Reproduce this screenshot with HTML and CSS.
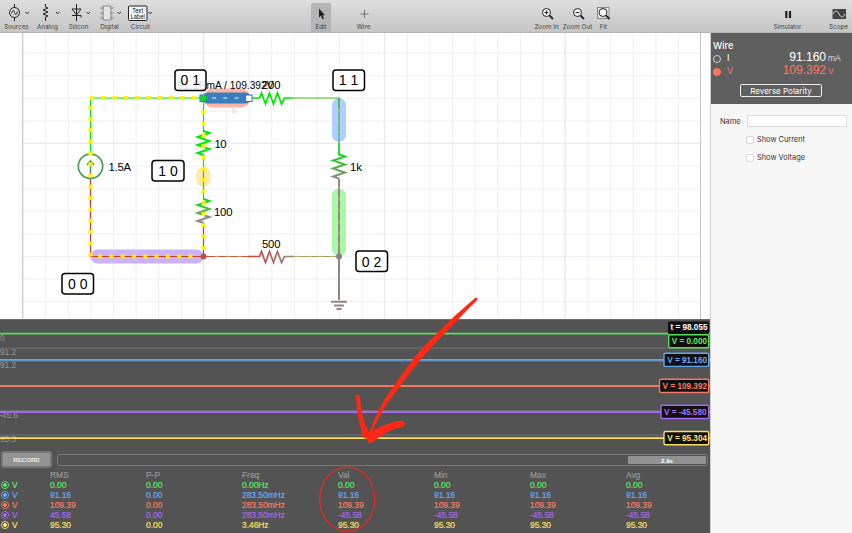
FILE: index.html
```html
<!DOCTYPE html>
<html lang="en">
<head>
<meta charset="utf-8">
<title>Circuit Simulator</title>
<link rel="stylesheet" href="styles.css">
</head>
<body>
<div class="app">
  <header class="toolbar">
    <nav class="tools parts">
      <div class="tool"><svg class="icon" viewBox="0 0 32 22"><path d="M13.500 2v3.500M13.500 15.500v3.500"/><circle cx="13.500" cy="10.500" r="5"/><path d="M10.500 11.500c1-4 2.500-3.500 3-1s2 3 3-1"/><path d="M24.500 10l1.700 1.700 1.700-1.700"/></svg><span>Sources</span></div>
      <div class="tool"><svg class="icon" viewBox="0 0 32 22"><path d="M13.500 2v3l2.500 1-5 2 5 2-5 2 5 2-2.500 1v4M24 10l1.700 1.700 1.700-1.700"/></svg><span>Analog</span></div>
      <div class="tool"><svg class="icon" viewBox="0 0 32 22"><path d="M13.500 2v17M9 7h9l-4.500 6zM9 13.500h9v2M23.500 10l1.700 1.700 1.700-1.700"/></svg><span>Silicon</span></div>
      <div class="tool"><svg class="icon digital" viewBox="0 0 32 22"><path d="M9 4h8v14H9zM6 6h4M6 11h4M6 16h4M16 6h4M16 11h4M16 16h4"/><path class="dark" d="M23.500 10l1.700 1.700 1.700-1.700"/></svg><span>Digital</span></div>
      <div class="tool"><svg class="icon" viewBox="0 0 32 22"><rect class="paper" x="3.500" y="4" width="18.500" height="14.500" rx="1"/><text x="12.700" y="10.500" text-anchor="middle">Text</text><text x="12.700" y="16.500" text-anchor="middle">Label</text><path d="M23.500 10l1.700 1.700 1.700-1.700"/></svg><span>Circuit</span></div>
    </nav>
    <nav class="tools modes">
      <div class="tool selected"><svg class="icon" viewBox="0 0 32 22"><path class="solid" d="M14 7.500v9l2-1.700 1.500 3.500 1.500-.7-1.500-3.300h2.500z"/></svg><span>Edit</span></div>
      <div class="tool"><svg class="icon thin" viewBox="0 0 32 22"><path d="M16.500 9v8M12.500 13h8"/></svg><span>Wire</span></div>
    </nav>
    <nav class="tools zooms">
      <div class="tool"><svg class="icon" viewBox="0 0 32 22"><circle class="paper" cx="15.500" cy="11.500" r="4"/><path d="M13.500 11.500h4M15.500 9.500v4"/><path class="thick" d="M18.500 14.500l3.500 3.500"/></svg><span>Zoom In</span></div>
      <div class="tool"><svg class="icon" viewBox="0 0 32 22"><circle class="paper" cx="15.500" cy="11.500" r="4"/><path d="M13.500 11.500h4"/><path class="thick" d="M18.500 14.500l3.500 3.500"/></svg><span>Zoom Out</span></div>
      <div class="tool"><svg class="icon" viewBox="0 0 32 22"><rect class="frame" x="9.500" y="6.500" width="11.500" height="11"/><circle class="paper" cx="15" cy="11.500" r="4"/><path class="thick" d="M18 14.500l3.500 3.500"/></svg><span>Fit</span></div>
    </nav>
    <nav class="tools views">
      <div class="tool"><svg class="icon" viewBox="0 0 32 22"><path class="solid" d="M13.200 10h2.200v7h-2.200zM16.900 10h2.200v7h-2.200z"/></svg><span>Simulator</span></div>
      <div class="tool"><svg class="icon" viewBox="0 0 32 22"><path class="screen" d="M9.500 8h13.500v10H9.500z"/><path class="wave" d="M10 13c2-4 4-4 6 0s4 4 6 0"/></svg><span>Scope</span></div>
    </nav>
  </header>

  <div class="body">
    <main class="workspace">
      <svg class="canvas" viewBox="0 33 710 286">
        <defs>
          <pattern id="grid" x="22.650" y="52.600" width="22.600" height="22.600" patternUnits="userSpaceOnUse"><path d="M0 0H22.600M0 0V22.600" fill="none" stroke="#e9ebf4" stroke-width="1.600"/></pattern>
          <linearGradient id="fall" gradientUnits="userSpaceOnUse" x1="0" y1="152" x2="0" y2="180"><stop stop-color="#00e40c"/><stop offset="1" stop-color="#968484"/></linearGradient>
          <linearGradient id="mid" gradientUnits="userSpaceOnUse" x1="0" y1="200" x2="0" y2="220"><stop stop-color="#00e40c"/><stop offset="1" stop-color="#968484"/></linearGradient>
          <linearGradient id="low" gradientUnits="userSpaceOnUse" x1="250" y1="0" x2="290" y2="0"><stop stop-color="#d04030"/><stop offset="1" stop-color="#96847c"/></linearGradient>
        </defs>
        <rect x="22.500" y="33" width="678" height="285.500" fill="url(#grid)"/>
        <path class="major" d="M203.500 33v286M384.300 33v286M565 33v286M22 143.200h678"/>
        <path class="border" d="M22.600 33v286M700.500 33v286"/>

        <g class="halo">
          <path stroke="#ffb4a6" stroke-width="19" d="M213 98h28"/>
          <path stroke="#3c7dbd" stroke-width="11" d="M208 98h37"/>
          <path stroke="#afd0ff" stroke-width="14" d="M339 105v30"/>
          <path stroke="#ffe8a9" stroke-width="14" d="M203.500 174v6"/>
          <path stroke="#a9f8a7" stroke-width="14" d="M339 195.500v53.500"/>
          <path stroke="#ccb1ff" stroke-width="14" d="M97.500 256.500h99"/>
        </g>
        <path class="ghost" d="M210 110.500h22v-3l8 3.500-8 3.500v-3h-22z"/>

        <g class="wire">
          <path stroke="#00f000" d="M90.500 154V98h113v34M203.500 155v45M204 98h4"/>
          <path stroke="#00e800" stroke-width="1.700" d="M249 98h10.500l2-5 4 11 4-11 4 11 4-11 4 11 3-6H293"/>
          <path stroke="#48c22c" d="M293 98h46v12"/>
          <path stroke="#3daa65" d="M339 98v45"/>
          <path stroke="#00dc16" stroke-width="1.700" d="M339 143v12"/>
          <path stroke="url(#fall)" stroke-width="1.900" d="M339 153v1.500l6 2-12 4 12 4-12 4 12 4-12 4 6 2"/>
          <path stroke="#968484" stroke-width="2" d="M339 179v121M331 301.700h16M334 305.500h10M336.500 309h5"/>
          <path stroke="#00e800" stroke-width="1.900" d="M203.500 131l6 2-12 4 12 4-12 4 12 4-12 4 6 2"/>
          <path stroke="url(#mid)" stroke-width="1.900" d="M203.500 199l6 2-12 4 12 4-12 4 12 4-12 4 6 2"/>
          <path stroke="#c63c30" d="M90.500 179v77.500h113V223"/>
          <path stroke="#cc5644" d="M204 256.500h45"/>
          <path stroke="url(#low)" stroke-width="1.700" d="M248 256.500h11.500l2-5 4 11 4-11 4 11 4-11 4 11 3-6H294"/>
          <path stroke="#a39a6e" d="M293 256.500h46"/>
          <circle cx="90.500" cy="166.300" r="12.200" stroke="#499c50" stroke-width="1.700"/>
          <path stroke="#499c50" stroke-width="1.500" d="M90.500 177v-15M87 165l3.500-4 3.500 4"/>
          <path stroke="#89bdd8" stroke-width="2" stroke-dasharray="4 7.300" d="M212 98h34"/>
        </g>
        <g class="faint-flow"><path d="M294 98h42M339 108v25M339 186v66M215 256.500h34M296 256.500h40"/></g>
        <g class="flow">
          <path d="M90 98h108M90.500 105.700v152M203.500 110.300v142M98 256.500h95"/>
        </g>
        <rect class="handle" x="200" y="95" width="6" height="6.500"/>
        <circle cx="203.500" cy="98" r="3" fill="#00e400"/>
        <rect class="handle white" x="245.500" y="95" width="6.500" height="6.500"/>
        <circle cx="203.500" cy="256.500" r="2.900" fill="#ba4f48"/>
        <circle cx="339" cy="256.500" r="2.900" fill="#8b7d7d"/>

        <g class="nodes">
          <rect x="175" y="70" width="31" height="20.500" rx="3"/><rect x="333" y="70" width="31.500" height="20.500" rx="3"/><rect x="152" y="160.500" width="32" height="20.500" rx="3"/><rect x="356" y="251" width="31.500" height="20.500" rx="3"/><rect x="62" y="273.500" width="31.500" height="20.500" rx="3"/>
        </g>
        <g class="parts-text">
          <text class="under" x="177" y="88.500">91.16</text>
          <text x="206.500" y="88.500" textLength="67" lengthAdjust="spacingAndGlyphs">mA / 109.392V</text><text x="262" y="88.500" textLength="18.500">200</text>
          <text x="214.500" y="148" textLength="12">10</text><text x="214" y="216" textLength="18.500">100</text><text x="262" y="247.500" textLength="18.500">500</text><text x="350" y="171" textLength="12">1k</text><text x="108.500" y="171" textLength="22.500">1.5A</text>
        </g>
        <g class="node-text">
          <text x="190.200" y="85">0 1</text><text x="348.500" y="85">1 1</text><text x="168" y="175.500">1 0</text><text x="371.500" y="266.500">0 2</text><text x="77.700" y="289">0 0</text>
        </g>
      </svg>

      <section class="scope">
        <svg class="plot" viewBox="0 319 710 132">
          <path class="edge" d="M0 319.200h710"/>
          <path class="rule" d="M0 348.200h710M0 361.200h710M0 410.800h710M0 435h710"/>
          <g class="scale"><text x="0" y="340.500">0</text><text x="0" y="355">91.2</text><text x="0" y="368">91.2</text><text x="-1" y="418">-45.6</text><text x="0" y="442">95.3</text></g>
          <g class="traces"><path stroke="#53e05c" d="M0 333.700h710"/><path stroke="#62a5f0" d="M0 359.800h710"/><path stroke="#f37861" d="M0 386h710"/><path stroke="#a467f2" d="M0 412h710"/><path stroke="#fbdf60" d="M0 438.200h710"/></g>
          <g class="badges">
            <rect class="time" x="668" y="321.500" width="41" height="12.500"/><text x="707.500" y="330.300" fill="#fff">t = 98.055</text>
            <rect x="668.700" y="334.700" width="40" height="13" stroke="#53e05c"/><text x="707" y="344.200" fill="#5ded67">V = 0.000</text>
            <rect x="664" y="353.200" width="44.700" height="13.200" stroke="#62a5f0"/><text x="707" y="362.700" fill="#69a8f6">V = 91.160</text>
            <rect x="659.500" y="379.300" width="49.200" height="13.200" stroke="#f37861"/><text x="707" y="388.800" fill="#fb7c65">V = 109.392</text>
            <rect x="661" y="405.300" width="47.700" height="13.200" stroke="#a467f2"/><text x="706.500" y="414.800" fill="#a872f7">V = -45.580</text>
            <rect x="664" y="431.500" width="44.700" height="13.200" stroke="#fbdf60"/><text x="707" y="441" fill="#ffe46c">V = 95.304</text>
          </g>
        </svg>
        <div class="controls"><button class="record">RECORD</button><div class="track"><div class="thumb">2.9s</div></div></div>
        <table class="stats">
          <tr class="head"><td></td><td>RMS</td><td>P-P</td><td>Freq</td><td>Val</td><td>Min</td><td>Max</td><td>Avg</td></tr>
          <tr class="green"><td><i class="radio"></i>V</td><td>0.00</td><td>0.00</td><td>0.00Hz</td><td>0.00</td><td>0.00</td><td>0.00</td><td>0.00</td></tr>
          <tr class="blue"><td><i class="radio"></i>V</td><td>91.16</td><td>0.00</td><td>283.50mHz</td><td>91.16</td><td>91.16</td><td>91.16</td><td>91.16</td></tr>
          <tr class="red"><td><i class="radio"></i>V</td><td>109.39</td><td>0.00</td><td>283.50mHz</td><td>109.39</td><td>109.39</td><td>109.39</td><td>109.39</td></tr>
          <tr class="purple"><td><i class="radio"></i>V</td><td>45.58</td><td>0.00</td><td>283.50mHz</td><td>-45.58</td><td>-45.58</td><td>-45.58</td><td>-45.58</td></tr>
          <tr class="yellow"><td><i class="radio"></i>V</td><td>95.30</td><td>0.00</td><td>3.46Hz</td><td>95.30</td><td>95.30</td><td>95.30</td><td>95.30</td></tr>
        </table>
      </section>
    </main>

    <aside class="inspector">
      <div class="readout">
        <h2>Wire</h2>
        <div class="reading"><i class="dot"></i><span class="key">I</span><span class="value">91.160</span><span class="unit">mA</span></div>
        <div class="reading active"><i class="dot"></i><span class="key">V</span><span class="value">109.392</span><span class="unit">V</span></div>
        <button class="reverse">Reverse Polarity</button>
      </div>
      <div class="form">
        <label class="name"><span>Name</span><input type="text"></label>
        <label class="check"><i class="box"></i>Show Current</label>
        <label class="check"><i class="box"></i>Show Voltage</label>
      </div>
    </aside>
  </div>

  <svg class="markup" viewBox="0 0 852 533">
    <path class="ink" d="M475.500 297.800C462 309 450 320 439 331.500C430 340 421 349 413.500 358.500C407 367 401 376 395.500 383.500C391 390 386 396 382 404C377 413 373 422 369.500 432L371.500 433C376 424 380 415 385.500 406.500C390 399 395 393 400 386.500C406 378 412 370 418.500 362.500C426 353 434 344 443 335.500C454 324 465 312 477.500 299.800Q478 297.500 475.500 297.800Z"/>
    <path class="ink" d="M355.800 396.500Q357 393 359.700 396C361 408 362.500 416 365 424L369.500 433C377 428 388 422 401 420.700Q405 421 404.800 424.500Q404 427 400 427.500C389 430 380 436 371.500 443Q368 444 367 438.500Q361 439 361 429C358 419 357 408 355.800 396.500Z"/>
    <ellipse class="ring" cx="347.300" cy="499.200" rx="27.500" ry="32"/>
  </svg>
</div>
</body>
</html>
```
FILE: styles.css
```css
* { box-sizing: border-box; }
body { margin: 0; font-family: "Liberation Sans", Arial, sans-serif; }
svg { display: block; }
.app { position: relative; width: 852px; height: 533px; overflow: hidden; display: flex; flex-direction: column; background: #fff; }

.toolbar { height: 33px; flex: none; display: flex; padding-left: 1px; background: linear-gradient(#dedede, #c5c5c5); border-bottom: 1px solid #b5b5b5; color: #444; font: 6.3px Inter, sans-serif; }
.tools { display: flex; flex: none; }
.tool { display: flex; flex-direction: column; align-items: center; justify-content: flex-end; width: 31px; padding-bottom: 1px; }
.tool span { line-height: 8px; white-space: nowrap; }
.parts { width: 310px; }
.parts .icon { transform: translateY(1px); }
.modes { width: 220px; }
.zooms { width: 241px; }
.modes .selected { width: 20px; margin: 3px 12px 0 0; background: #b5b5b5; border-radius: 2px 2px 0 0; }
.modes .tool:last-child { width: 41px; }
.zooms .tool:last-child { width: 21px; }
.views { gap: 20px; }
.icon { flex: none; width: 32px; height: 22px; fill: none; stroke: #222; stroke-width: 1; }
.icon text { font: 5.5px Inter, sans-serif; fill: #111; stroke: none; }
.icon .paper { fill: #f4f4f4; }
.icon .solid { fill: #222; stroke: none; }
.icon .thick { stroke-width: 1.8; }
.icon .screen { fill: #444; stroke: none; }
.icon .wave { stroke: #ddd; }
.icon .frame { stroke: #888; fill: #e8e8e8; }
.icon.thin { stroke: #777; }
.icon.digital { stroke: #888; fill: #e4e4e4; }
.digital .dark { stroke: #222; fill: none; }

.body { flex: 1; display: flex; min-height: 0; }
.workspace { width: 710px; flex: none; display: flex; flex-direction: column; }
.canvas { width: 710px; height: 286px; }
.major { stroke: #e6e8f2; stroke-width: 1; }
.border { stroke: #c2c4d0; stroke-width: 1; }
.halo { stroke-linecap: round; }
.ghost { fill: #eeeeee; }
.wire { fill: none; stroke-width: 1.2; }
.flow { stroke: #fff200; stroke-width: 4; stroke-dasharray: 4 7.3; fill: none; }
.faint-flow { stroke: #b7c94a; stroke-width: 1.4; stroke-dasharray: 4 7.3; opacity: .65; }
.handle { fill: #6aafcf; stroke: #2d73b5; stroke-width: 1; }
.handle.white { fill: #fff; }
.nodes { fill: #fff; stroke: #000; stroke-width: 1.5; }
.parts-text { font-size: 11.3px; fill: #000; }
.parts-text .under { fill: #ddd; }
.node-text { font-size: 14px; text-anchor: middle; }

.scope { flex: 1; background: #535353; min-height: 0; }
.plot { width: 710px; height: 132px; }
.edge { stroke: #777; }
.rule { stroke: #727272; }
.scale { font-size: 8.3px; fill: #969696; }
.traces { stroke-width: 1.8; }
.badges { font-size: 8.2px; font-weight: bold; text-anchor: end; }
.badges rect { fill: #101010; stroke-width: 1.4; rx: 1.5px; }
.badges .time { stroke: none; }
.controls { display: flex; align-items: center; gap: 5px; height: 17px; padding: 0 2px 0 1px; }
.record { width: 51px; height: 17px; padding: 0; border: 2px solid #777; border-radius: 3px; background: #939393; color: #eee; font: bold 6.1px "Liberation Sans", sans-serif; }
.track { flex: 1; height: 12px; padding: 1px; display: flex; justify-content: flex-end; border: 1px solid #777; border-radius: 3px; }
.thumb { width: 78px; height: 8px; border-radius: 1px; background: #929292; color: #fff; font: bold 6.2px/9px "Liberation Sans", sans-serif; text-align: center; }
.stats { margin-top: 1.5px; border-collapse: collapse; table-layout: fixed; width: 722px; font-size: 8.4px; line-height: 10px; -webkit-text-stroke: .2px; }
.stats td { width: 96px; height: 10px; padding: 0; white-space: nowrap; }
.stats td:first-child { width: 50px; }
.head { color: #969696; }
.green { color: #5ae864; }
.blue { color: #68a9f4; }
.red { color: #f47b65; }
.purple { color: #a46af1; }
.yellow { color: #fae067; }
.radio { display: inline-block; width: 8px; height: 8px; margin: 0 3px 0 1px; vertical-align: -1.5px; border: 1px solid; border-radius: 50%; background: radial-gradient(currentColor 0 40%, #444 52%); }

.inspector { flex: 1; background: #f7f7f7; border-left: 1px solid #cfcfcf; font-family: Inter, sans-serif; color: #333; }
.readout { height: 71px; padding: 7px 5px 0 2px; background: #5f5f5f; color: #fff; }
.readout h2 { margin: 0; font: 500 9.2px/11px Inter, sans-serif; }
.reading { display: flex; align-items: baseline; height: 13px; line-height: 13px; }
.reading .dot { flex: none; width: 8px; height: 8px; border: 1px solid #ccc; border-radius: 50%; align-self: center; margin-top: 2px; }
.reading .key { width: 7px; flex: none; margin-left: 6px; font-size: 9px; }
.reading .value { width: 92px; flex: none; text-align: right; font: 12.2px/13px "Liberation Sans", sans-serif; letter-spacing: -.1px; }
.reading .unit { margin-left: 2px; font: 8.5px "Liberation Sans", sans-serif; color: #ddd; }
.reading.active, .active .unit { color: #ff765e; }
.active .dot { background: #ff765e; border-color: #ff765e; }
.reverse { display: block; width: 82px; height: 13px; margin: 7px 0 0 27px; padding: 0; border: 1px solid #eee; border-radius: 2px; background: transparent; color: #fff; font: 8px/10px Inter, sans-serif; }
.form { padding: 11px 5px 0 9px; font-size: 7.4px; }
.name { display: flex; align-items: center; justify-content: space-between; height: 12px; }
.name input { width: 100px; height: 12px; padding: 0; border: 1px solid #ddd; background: #fff; }
.check { display: flex; align-items: center; gap: 3px; height: 9px; margin: 8px 0 9px 26px; }
.check .box { width: 8px; height: 8px; border: 1px solid #d8d8d8; border-radius: 2px; background: #fff; }

.markup { position: absolute; inset: 0; width: 852px; height: 533px; pointer-events: none; }
.ink { fill: #ff2814; }
.ring { fill: none; stroke: #e72b1b; stroke-width: 1.3; }
```
